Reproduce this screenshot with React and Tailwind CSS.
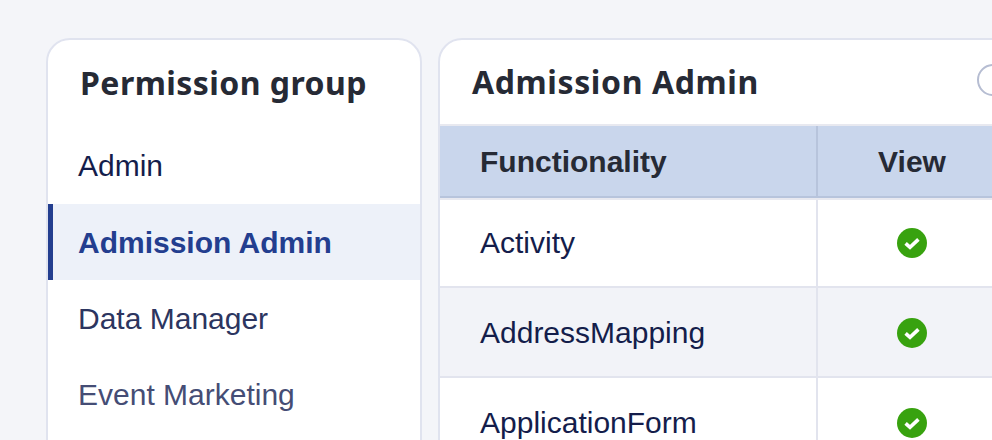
const groups = [
  { name: "Admin", color: "text-[#141d4b]", pad: "pb-[2px]" },
  { name: "Admission Admin", active: true },
  { name: "Data Manager", color: "text-[#2c3560]" },
  { name: "Event Marketing", color: "text-[#454d75]" },
];

const rows = [
  { name: "Activity", cls: "h-[88px] bg-white", text: "pb-[2px]", icon: "" },
  { name: "AddressMapping", cls: "h-[90px] bg-[#f2f3f8]", text: "", icon: "pt-[1px]" },
  { name: "ApplicationForm", cls: "h-[90px] bg-white", text: "", icon: "pt-[1px]" },
];

function CheckIcon() {
  return (
    <svg width="30" height="30" viewBox="0 0 30 30">
      <circle cx="15" cy="15" r="15" fill="#38a20f" />
      <path d="M8.6 15.4l4.4 4 8.4-8" fill="none" stroke="#fff" strokeWidth="3.6" />
    </svg>
  );
}

export default function App() {
  return (
    <div className="h-[440px] w-[992px] overflow-hidden bg-[#f4f5f9] pl-[46px] pt-[38px] flex gap-4 font-['Liberation_Sans',sans-serif]">
      <div className="w-[376px] h-[500px] shrink-0 rounded-[24px] border-2 border-[#e0e3ef] bg-white overflow-hidden">
        <h2 className="h-[88px] pl-[32px] pt-[23px] font-['Noto_Sans',sans-serif] text-[32px] leading-[40px] tracking-[0.45px] font-bold text-[#262a35]">
          Permission group
        </h2>
        <div>
          {groups.map((g) =>
            g.active ? (
              <div key={g.name} className="h-[76px] flex items-center pl-[25px] border-l-[5px] border-[#233e8f] bg-[#edf1f9] text-[30px] font-bold text-[#233e8f]">
                {g.name}
              </div>
            ) : (
              <div key={g.name} className={`h-[76px] flex items-center pl-[30px] text-[30px] ${g.color} ${g.pad || ""}`}>
                {g.name}
              </div>
            )
          )}
        </div>
      </div>

      <div className="w-[700px] h-[500px] shrink-0 rounded-tl-[24px] border-2 border-[#e0e3ef] bg-white overflow-hidden">
        <div className="h-[84px] flex items-center">
          <h2 className="w-[537px] pl-[32px] font-['Noto_Sans',sans-serif] text-[32px] tracking-[0.6px] font-bold text-[#262a35]">Admission Admin</h2>
          <div className="w-[32px] h-[32px] shrink-0 mb-[4px] rounded-full border-2 border-[#b6bdd2]" />
        </div>
        <div className="h-[2px] bg-[#e8e9f0]" />
        <div className="flex h-[72px] bg-[#c9d6ec] border-b-2 border-[#b7c4dc] text-[30px] font-bold text-[#262a35]">
          <div className="w-[378px] flex items-center pl-[40px] border-r-2 border-[#b7c4dc]">Functionality</div>
          <div className="w-[188px] flex items-center justify-center">View</div>
        </div>
        <div className="h-[2px] bg-[#e8e9f0]" />
        {rows.map((r) => (
          <div key={r.name} className={`flex border-b-2 border-[#e2e4ee] text-[30px] text-[#141d4b] ${r.cls}`}>
            <div className={`w-[378px] flex items-center pl-[40px] border-r-2 border-[#e2e4ee] ${r.text}`}>{r.name}</div>
            <div className={`w-[188px] flex items-center justify-center ${r.icon}`}>
              <CheckIcon />
            </div>
          </div>
        ))}
      </div>
    </div>
  );
}
